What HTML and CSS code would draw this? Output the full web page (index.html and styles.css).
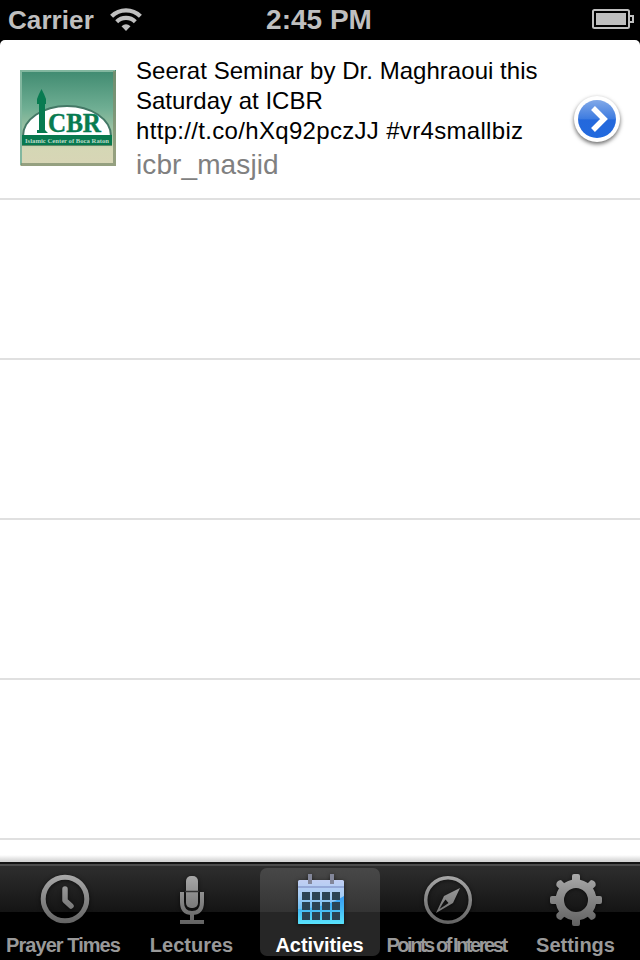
FILE: index.html
```html
<!DOCTYPE html>
<html lang="en">
<head>
<meta charset="utf-8">
<title>Activities</title>
<link rel="stylesheet" href="styles.css">
</head>
<body>
<div class="screen">
  <header class="status">
    <div class="status-left">
      <span class="carrier">Carrier</span>
      <svg class="wifi" width="32" height="24" viewBox="0 0 32 24">
        <g fill="none" stroke="#bfbfbf" stroke-width="4.2">
          <path d="M1.6 8.3A20.5 20.5 0 0 1 30.4 8.3"/>
          <path d="M6.7 13.7A13.3 13.3 0 0 1 25.3 13.7"/>
        </g>
        <path d="M11.5 18.3Q16 14.2 20.5 18.3L16 23Z" fill="#bfbfbf"/>
      </svg>
    </div>
    <span class="time">2:45 PM</span>
    <svg class="battery" width="42" height="20" viewBox="0 0 42 20">
      <rect x="1" y="1" width="36" height="18" rx="1.5" fill="none" stroke="#bfbfbf" stroke-width="2"/>
      <rect x="4" y="4" width="30" height="12" fill="#bfbfbf"/>
      <path d="M38 7h3v6h-3" fill="none" stroke="#bfbfbf" stroke-width="2"/>
    </svg>
  </header>
  <main class="list">
    <article class="row tweet">
      <svg class="avatar" width="96" height="96" viewBox="0 0 96 96">
        <defs>
          <linearGradient id="sky" x1="0" y1="0" x2="0" y2="1">
            <stop offset="0" stop-color="#3f8a70"/><stop offset=".4" stop-color="#6fae93"/>
            <stop offset=".75" stop-color="#b9cfae"/><stop offset=".82" stop-color="#d5d7b5"/><stop offset="1" stop-color="#d8d5b6"/>
          </linearGradient>
        </defs>
        <rect width="96" height="96" fill="url(#sky)"/>
        <path d="M1 95V1H95" fill="none" stroke="#82b79f" stroke-width="2"/>
        <path d="M94.5 1V94.5H1" fill="none" stroke="#7f8e6e" stroke-opacity=".75" stroke-width="3"/>
        <path d="M3 66A44 30 0 0 1 91 66Z" fill="#fff" stroke="#447866" stroke-width="2"/>
        <rect x="2" y="65" width="90" height="10" fill="#08794f"/>
        <path d="M2 75.5H92" stroke="#638a69"/>
        <path d="M21.5 19L24 24L26 29V34H25V60L28 63H17V60H19V34H17V29L19 24Z" fill="#087b51"/>
        <text class="logo" x="28" y="61.5" textLength="53" lengthAdjust="spacingAndGlyphs">CBR</text>
        <text class="logo-caption" x="5" y="72.5" textLength="84" lengthAdjust="spacingAndGlyphs">Islamic Center of Boca Raton</text>
      </svg>
      <div class="content">
        <p class="message"><span class="l1">Seerat Seminar by Dr. Maghraoui this</span><br>Saturday at ICBR<br><span class="l3">http://t.co/hXq92pczJJ #vr4smallbiz</span></p>
        <p class="author">icbr_masjid</p>
      </div>
      <svg class="disclosure" width="60" height="60" viewBox="0 0 60 60">
        <defs>
          <linearGradient id="blue" x1="0" y1="0" x2="0" y2="1">
            <stop offset="0" stop-color="#82a9e8"/><stop offset=".5" stop-color="#3d7be0"/>
            <stop offset=".52" stop-color="#2468dc"/><stop offset="1" stop-color="#226ade"/>
          </linearGradient>
        </defs>
        <circle class="disc" cx="30" cy="30" r="23" fill="#fff"/>
        <circle cx="30" cy="30" r="19" fill="url(#blue)"/>
        <path d="M26 19L37 30L26 41" fill="none" stroke="#fff" stroke-width="5.5"/>
      </svg>
    </article>
    <div class="row"></div>
    <div class="row"></div>
    <div class="row"></div>
    <div class="row"></div>
  </main>
  <nav class="tabs">
    <svg class="defs" width="0" height="0">
      <defs>
        <linearGradient id="metal" gradientUnits="userSpaceOnUse" x1="0" y1="6" x2="0" y2="58">
          <stop offset="0" stop-color="#aaa"/><stop offset="1" stop-color="#606060"/>
        </linearGradient>
      </defs>
    </svg>
    <a class="tab">
      <svg class="icon" width="60" height="60" viewBox="0 0 60 60">
        <circle cx="31" cy="31" r="21.8" fill="none" stroke="url(#metal)" stroke-width="5"/>
        <path d="M31 21V32.5L37 38" fill="none" stroke="url(#metal)" stroke-width="5.5" stroke-linecap="round" stroke-linejoin="round"/>
      </svg>
      <span class="label prayer">Prayer Times</span>
    </a>
    <a class="tab">
      <svg class="icon" width="60" height="60" viewBox="0 0 60 60">
        <rect x="24" y="8" width="12" height="32" rx="5" fill="url(#metal)"/>
        <path d="M23 23.5H37" stroke="#333" stroke-width="1.5"/>
        <path d="M20 24V34Q20 45 30 45T40 34V24" fill="none" stroke="url(#metal)" stroke-width="4"/>
        <path d="M28 45H32V52H42V56H18V52H28Z" fill="url(#metal)"/>
      </svg>
      <span class="label lectures">Lectures</span>
    </a>
    <a class="tab active">
      <svg class="icon" width="60" height="60" viewBox="0 0 60 60">
        <defs>
          <linearGradient id="cal" gradientUnits="userSpaceOnUse" x1="0" y1="12" x2="0" y2="56">
            <stop offset="0" stop-color="#c2cff3"/><stop offset=".35" stop-color="#a6cdf5"/><stop offset=".6" stop-color="#76c2f5"/><stop offset="1" stop-color="#58e2fb"/>
          </linearGradient>
          <linearGradient id="gloss" gradientUnits="userSpaceOnUse" x1="0" y1="28" x2="0" y2="56">
            <stop offset="0" stop-color="#1e90f2"/><stop offset="1" stop-color="#58e2fb"/>
          </linearGradient>
        </defs>
        <rect x="8" y="12" width="46" height="44" rx="1.5" fill="url(#cal)"/>
        <path d="M8 41Q36 40 54 28V56H8Z" fill="url(#gloss)" fill-opacity=".8"/>
        <path d="M8 19H54" stroke="#94a9d8" stroke-width="2"/>
        <path d="M20 6V16M42 6V16" stroke="#83879a" stroke-width="4"/>
        <path d="M12 24h8v8h-8zM22 24h8v8h-8zM32 24h8v8h-8zM42 24h8v8h-8zM12 34h8v8h-8zM22 34h8v8h-8zM32 34h8v8h-8zM42 34h8v8h-8zM12 44h8v8h-8zM22 44h8v8h-8zM32 44h8v8h-8zM42 44h8v8h-8z" fill="#2b4354"/>
      </svg>
      <span class="label activities">Activities</span>
    </a>
    <a class="tab">
      <svg class="icon" width="60" height="60" viewBox="0 0 60 60">
        <circle cx="30" cy="32" r="22.3" fill="none" stroke="url(#metal)" stroke-width="3.5"/>
        <path fill-rule="evenodd" d="M42 20L35 35L18 45L26 28ZM27.5 31.5L30.5 35L27 37.5L21.5 41L25 35Z" fill="url(#metal)"/>
      </svg>
      <span class="label points">Points of Interest</span>
    </a>
    <a class="tab">
      <svg class="icon" width="60" height="60" viewBox="0 0 60 60">
        <circle cx="30" cy="32" r="16.2" fill="none" stroke="url(#metal)" stroke-width="8.4"/>
        <path d="M26 14V8Q26 6 28 6H32Q34 6 34 8V14ZM26 50V56Q26 58 28 58H32Q34 58 34 56V50ZM12 28H6Q4 28 4 30V34Q4 36 6 36H12ZM48 28H54Q56 28 56 30V34Q56 36 54 36H48ZM14.5 22L10.5 18Q9.5 14 13 12.5L15 12L20 17ZM45.5 22L49.5 18Q50.5 14 47 12.5L45 12L40 17ZM14.5 42L10.5 46Q9.5 50 13 51.5L15 52L20 47ZM45.5 42L49.5 46Q50.5 50 47 51.5L45 52L40 47Z" fill="url(#metal)"/>
      </svg>
      <span class="label settings">Settings</span>
    </a>
  </nav>
</div>
</body>
</html>
```

FILE: styles.css
```css
* { box-sizing: border-box; }
body { margin: 0; background: #000; font-family: "Liberation Sans", Arial, sans-serif; }
p { margin: 0; }
.screen { width: 640px; height: 960px; display: flex; flex-direction: column; overflow: hidden; }

.status { height: 40px; flex: none; display: grid; grid-template-columns: 1fr auto 1fr; align-items: center; padding: 0 6px 0 8px; color: #bfbfbf; font-weight: bold; background: #000; }
.status-left { display: flex; align-items: center; gap: 16px; }
.carrier { font-size: 26px; line-height: 40px; letter-spacing: .08px; }
.time { font-size: 28px; line-height: 38px; letter-spacing: 0; margin: 0 4px 0 0; }
.battery { justify-self: end; margin-bottom: 2px; }

.list { height: 822px; flex: none; background: linear-gradient(#fff 815px, #d4d4d4 821px); border-radius: 5px 5px 0 0; overflow: hidden; }
.row { height: 160px; border-bottom: 2px solid #e0e0e0; }
.tweet { display: flex; align-items: flex-start; padding: 16px 13px 0 20px; }
.avatar { margin-top: 14px; flex: none; }
.content { margin-left: 20px; width: 420px; flex: none; white-space: nowrap; }
.message { font-size: 24px; line-height: 30px; color: #000; }
.l1 { letter-spacing: .04px; }
.l3 { letter-spacing: .32px; }
.author { font-size: 28px; line-height: 34px; margin-top: 2px; color: #808080; letter-spacing: .1px; }
.disclosure { margin: 33px 0 0 11px; flex: none; }
.disc { filter: drop-shadow(0 2px 2px rgba(0, 0, 0, .6)); }
.logo { font: bold 27px "Liberation Serif", serif; fill: #087b51; stroke: #087b51; stroke-width: .4px; }
.logo-caption { font: bold 6.5px "Liberation Serif", serif; fill: #b9d8c6; }

.tabs { height: 98px; flex: none; display: grid; grid-template-columns: repeat(5, 128px); padding-top: 6px; background: linear-gradient(#141414 0 2px, #4c4c4c 2px 4px, #2e2e2e 4px, #141414 50px, #000 50px); }
.defs { position: absolute; }
.tab { width: 120px; height: 88px; margin: 0 4px; display: flex; flex-direction: column; align-items: center; border-radius: 7px; color: #999; }
.active { color: #fff; background: linear-gradient(#484848, #343434 44px, #262626 44px); }
.icon { flex: none; filter: drop-shadow(0 1px 2px rgba(0, 0, 0, .6)); }
.label { font-size: 20px; font-weight: bold; line-height: 24px; margin-top: 5px; margin-right: 1px; white-space: nowrap; }
.prayer { letter-spacing: -.95px; margin-right: 2px; }
.activities { letter-spacing: -.1px; }
.points { letter-spacing: -2.45px; margin-right: 4px; }
```
